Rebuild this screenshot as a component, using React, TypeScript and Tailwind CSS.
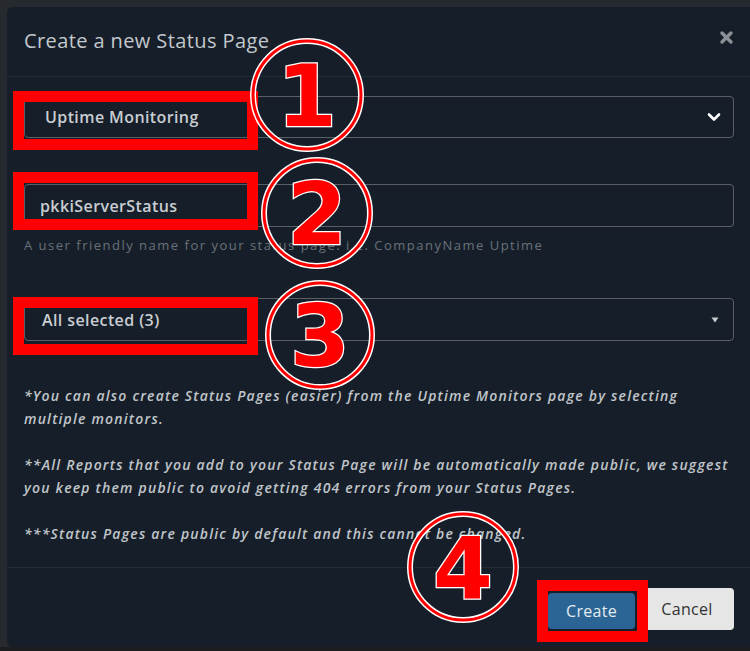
import React from 'react';

const FONT = { fontFamily: '"Open Sans", "Noto Sans", sans-serif' };

type Mark = { n: string; cx: number; cy: number; r: number };

const MARKS: Mark[] = [
  { n: '1', cx: 307, cy: 95, r: 54 },
  { n: '2', cx: 317, cy: 213, r: 53 },
  { n: '3', cx: 320, cy: 335, r: 52 },
  { n: '4', cx: 463, cy: 567, r: 53 },
];

const BOXES = [
  'left-[13px] top-[91px] w-[245px] h-[59px]',
  'left-[13px] top-[172px] w-[245px] h-[58px]',
  'left-[13px] top-[297px] w-[245px] h-[58px]',
  'left-[537px] top-[580px] w-[111px] h-[62px]',
];

function NumberMark({ m }: { m: Mark }) {
  const size = m.r * 2 + 8;
  return (
    <svg
      className="absolute pointer-events-none"
      style={{ left: m.cx - size / 2, top: m.cy - size / 2 }}
      width={size}
      height={size}
      viewBox={`0 0 ${size} ${size}`}
    >
      <circle cx={size / 2} cy={size / 2} r={m.r} fill="none" stroke="#ffffff" strokeWidth={6} />
      <circle cx={size / 2} cy={size / 2} r={m.r} fill="none" stroke="#ff0000" strokeWidth={3} />
      <text
        x={size / 2}
        y={size / 2 + 31}
        textAnchor="middle"
        fontSize={86}
        fontWeight={700}
        fontFamily='"DejaVu Sans", "Liberation Sans", sans-serif'
        fill="#ff0000"
        stroke="#ffffff"
        strokeWidth={2.5}
        paintOrder="stroke"
      >
        {m.n}
      </text>
    </svg>
  );
}

export default function App() {
  return (
    <div className="relative w-[750px] h-[651px] overflow-hidden bg-[#1b1d21]" style={FONT}>
      <div className="absolute left-0 top-0 w-[750px] h-[647px] bg-[#26292d]" />
      <div className="absolute left-[7px] top-[7px] w-[760px] h-[640px] rounded-md bg-[#161f29] flex flex-col">
        {/* header */}
        <div className="h-[70px] shrink-0 border-b border-[#1f2d3b] flex items-center justify-between pl-[17px] pr-[33px]">
          <h4 className="text-[20px] text-[#c3c8cd] tracking-[0.4px] -mt-[1px]">Create a new Status Page</h4>
          <svg width="15" height="15" viewBox="0 0 15 15" className="-mt-[8px]">
            <path d="M3 3 L12 12 M12 3 L3 12" stroke="#8b9096" strokeWidth="3.4" strokeLinecap="round" />
          </svg>
        </div>

        {/* body */}
        <div className="flex-1 pl-[17px] pr-[33px]">
          <div className="mt-[19px] h-[42px] rounded border border-[#5a5f66] flex items-center justify-between pl-[20px] pr-[12px]">
            <span className="text-[16px] font-semibold text-[#c9cdd2] tracking-[0.4px]">Uptime Monitoring</span>
            <svg width="14" height="10" viewBox="0 0 14 10">
              <path d="M2 2.5 L7 7.5 L12 2.5" fill="none" stroke="#ffffff" strokeWidth="2.6" strokeLinecap="round" strokeLinejoin="round" />
            </svg>
          </div>

          <div className="mt-[46px] h-[43px] rounded border border-[#5a5f66] flex items-center pl-[15px]">
            <span className="text-[16px] font-semibold text-[#c9cdd2] tracking-[0.4px]">pkkiServerStatus</span>
          </div>
          <p className="mt-[9px] text-[13px] text-[#6a7179] leading-[18px] tracking-[1.5px]">
            A user friendly name for your status page. i.e. CompanyName Uptime
          </p>

          <div className="mt-[44px] h-[43px] rounded border border-[#5a5f66] flex items-center justify-between pl-[17px] pr-[14px]">
            <span className="text-[16px] font-semibold text-[#c9cdd2] tracking-[0.4px]">All selected (3)</span>
            <svg width="8" height="6" viewBox="0 0 8 6">
              <path d="M0.5 0.5 L7.5 0.5 L4 5.5 Z" fill="#c9cdd2" />
            </svg>
          </div>

          <div className="mt-[43px] text-[14px] italic font-semibold text-[#c0c5ca] leading-[23px] tracking-[1.2px]">
            <p>*You can also create Status Pages (easier) from the Uptime Monitors page by selecting multiple monitors.</p>
            <p className="mt-[23px]">
              **All Reports that you add to your Status Page will be automatically made public, we suggest you keep them
              public to avoid getting 404 errors from your Status Pages.
            </p>
            <p className="mt-[23px]">***Status Pages are public by default and this cannot be changed.</p>
          </div>
        </div>

        {/* footer */}
        <div className="h-[80px] shrink-0 border-t border-[#1f2d3b] flex items-start justify-end gap-[5px] pr-[33px] pt-[20px]">
          <button className="h-[36px] w-[87px] mt-[5px] rounded bg-[#2a6595] text-[16px] text-[#e4ebf1] tracking-[0.3px]">
            Create
          </button>
          <button className="h-[42px] w-[94px] rounded bg-[#e6e6e6] text-[16px] text-[#333333] tracking-[0.3px]">
            Cancel
          </button>
        </div>
      </div>

      {BOXES.map((b, i) => (
        <div key={i} className={`absolute ${b} border-[11px] border-[#ff0000] pointer-events-none`} />
      ))}
      {MARKS.map((m) => (
        <NumberMark key={m.n} m={m} />
      ))}
    </div>
  );
}
